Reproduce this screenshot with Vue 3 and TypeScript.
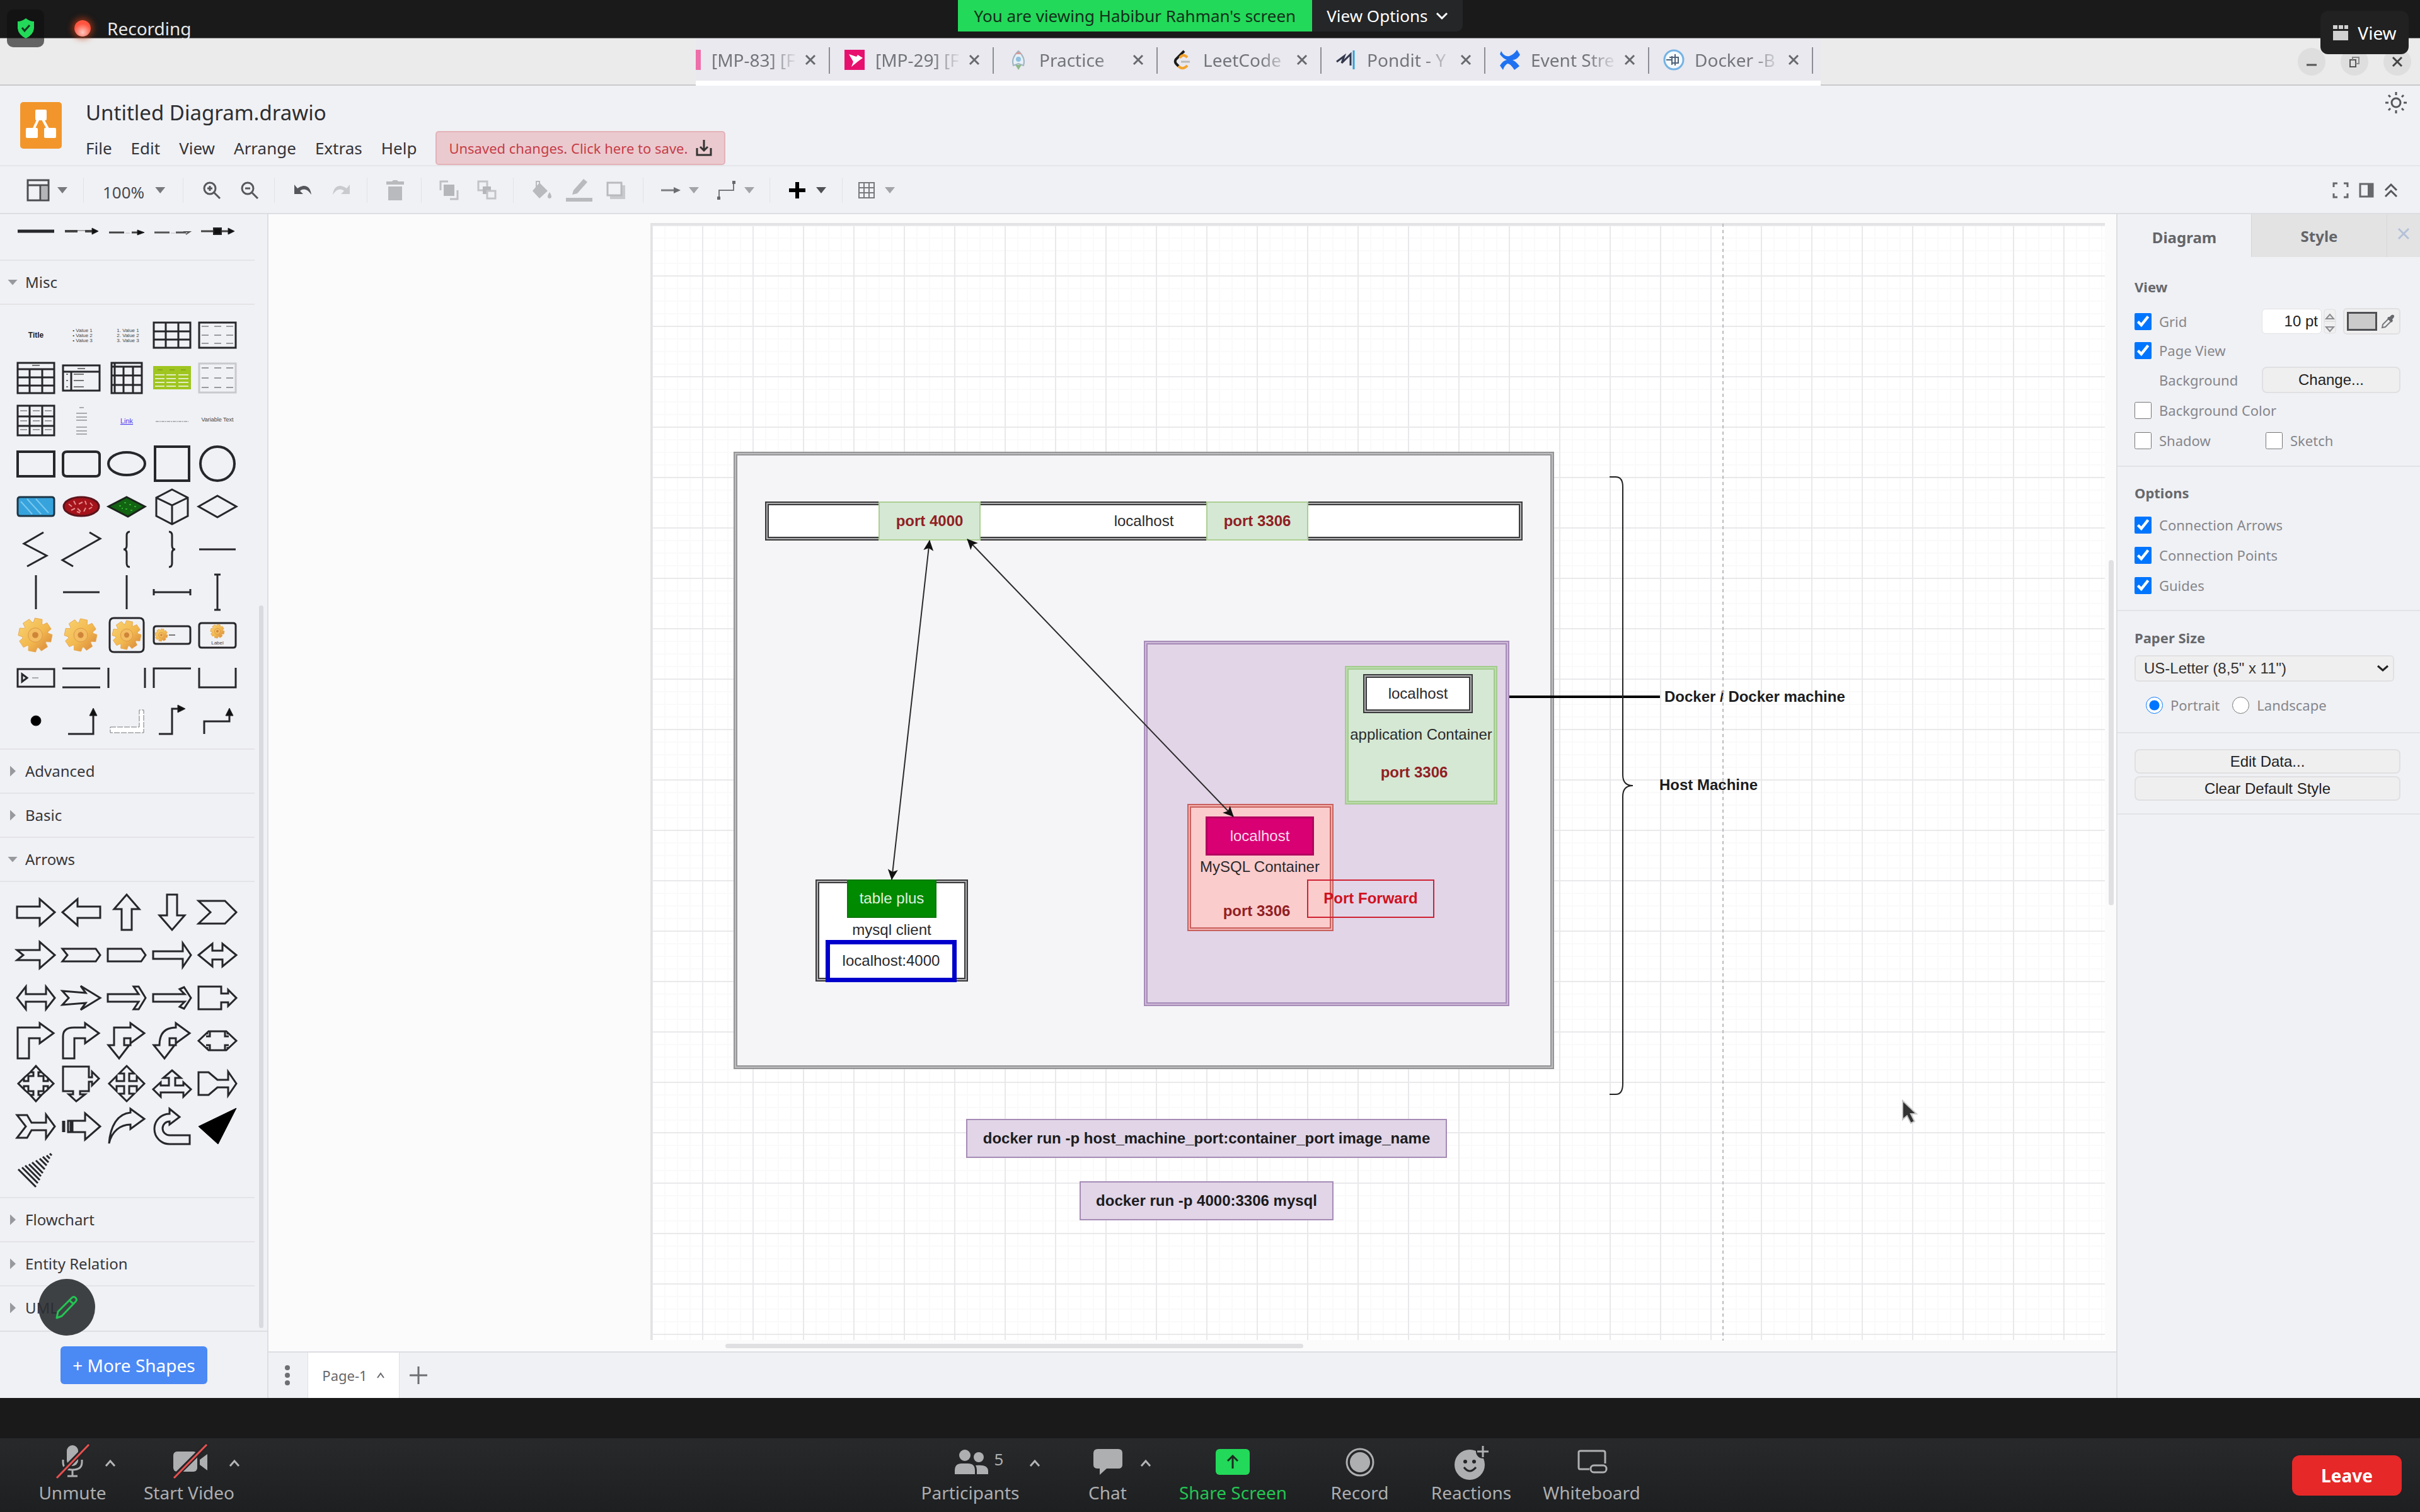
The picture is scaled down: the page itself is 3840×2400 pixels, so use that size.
<script setup lang="ts">
import { ref } from 'vue'

type Path = { d: string; f?: string; s?: string; w?: number; dash?: string }
type Label = { x: number; y: number; t: string; c?: string }
type Shape = { p?: Path[]; t?: Label[]; gear?: [number, number, number] }

const INK = '#26272a'
const line = (d: string, w = 3): Path => ({ d, w })
const solid = (d: string): Path => ({ d, f: '#111', w: 1 })

function gearPath(cx: number, cy: number, r: number): string {
  const pts: string[] = []
  const teeth = 8
  for (let i = 0; i < teeth; i++) {
    const a = (i / teeth) * Math.PI * 2 + 0.2
    const steps: [number, number][] = [[-0.34, 0.76], [-0.22, 1], [0.22, 1], [0.34, 0.76]]
    for (const [off, k] of steps) {
      pts.push(`${(cx + Math.cos(a + off) * r * k).toFixed(1)} ${(cy + Math.sin(a + off) * r * k).toFixed(1)}`)
    }
  }
  return 'M' + pts.join('L') + 'Z'
}

const dashes = (ys: number[]): Path => ({
  d: ys.map((y) => `M-25 ${y}h11M-5 ${y}h11M14 ${y}h11`).join(''),
  s: '#9a9ba0',
  w: 2,
})

const connectors: Shape[] = [
  { p: [line('M-29 0H29', 5)] },
  { p: [{ d: 'M-26 0H-6M6 0H18', w: 4, s: '#444' }, { d: 'M-6 -1H6', s: '#aaa', w: 2 }, solid('M17-5L27 0L17 5Z')] },
  { p: [{ d: 'M-28 2H-4M8 2H20', w: 3, s: '#444' }, { d: 'M-2 3H5', s: '#bbb', w: 1 }, solid('M17-2L28 2L17 6Z')] },
  { p: [{ d: 'M-28 2H-4M6 2H22', w: 3, s: '#555' }, { d: 'M-2 3H5', s: '#bbb', w: 1 }, { d: 'M18 1H28L22 5', s: '#555', w: 2 }] },
  { p: [{ d: 'M-26 0H20', w: 3, s: '#444' }, { d: 'M-6-5H6V5H-6Z', f: '#111', w: 2 }, solid('M17-5L27 0L17 5Z')] },
]

const misc: Shape[] = [
  { t: [{ x: 0, y: 4, t: 'Title', c: 'b' }] },
  { t: [{ x: 2, y: -5, t: '• Value 1' }, { x: 2, y: 3, t: '• Value 2' }, { x: 2, y: 11, t: '• Value 3' }] },
  { t: [{ x: 2, y: -5, t: '1. Value 1' }, { x: 2, y: 3, t: '2. Value 2' }, { x: 2, y: 11, t: '3. Value 3' }] },
  { p: [line('M-29-20H29V20H-29ZM-10-20V20M10-20V20M-29-6H29M-29 7H29')] },
  { p: [line('M-29-20H29V20H-29Z'), dashes([-14, 0, 13])] },
  { p: [line('M-29-24H29V24H-29ZM-29-14H29M-10-14V24M10-14V24M-29-1H29M-29 12H29'), { d: 'M-6-20H6', s: '#777', w: 2 }] },
  { p: [line('M-29-20H29V20H-29ZM-29-10H29M-16-10V20'), { d: 'M-6-15H6M-12-6H4M-12 4H4M-12 14H4M-24-6h3M-24 4h3M-24 14h3', s: '#777', w: 2 }] },
  { p: [line('M-24-24H24V24H-24ZM-24-18H24M-19-24V24M-5-18V24M10-18V24M-24-4H24M-24 11H24')] },
  { p: [{ d: 'M-29-18H29V17H-29Z', f: '#9fc51f', s: '#9fc51f', w: 2 }, { d: 'M-27-5h15M-9-5h15M10-5h16M-27 1h15M-9 1h15M10 1h16M-27 7h15M-9 7h15M10 7h16M-27 13h15M-9 13h15M10 13h16', s: '#e3edc0', w: 2 }, { d: 'M-23-13h8M-4-13h8M14-13h8', s: '#6f8f10', w: 1 }] },
  { p: [{ d: 'M-29-23H29V23H-29Z', s: '#c9cacd', w: 3 }, dashes([-16, 0, 15])] },
  { p: [line('M-29-24H29V23H-29ZM-10-24V23M10-24V23M-29-7H29M-29 8H29'), dashes([-16, 0, 14])] },
  { p: [{ d: 'M-3-21H4M-8-12H9M-8-6H9M-8-1H9M-8 10H9M-8 16H9M-8 21H9', s: '#a9aaae', w: 2 }] },
  { t: [{ x: 0, y: 4, t: 'Link', c: 'link' }] },
  { p: [{ d: 'M-26 1H26', s: '#b3b4b8', w: 2, dash: '5 1 2 1' }] },
  { t: [{ x: 0, y: 1, t: 'Variable Text', c: 'var' }] },
  { p: [line('M-29-19H29V20H-29Z', 4)] },
  { p: [line('M-23-19H23Q29-19 29-13V14Q29 20 23 20H-23Q-29 20-29 14V-13Q-29-19-23-19Z', 4)] },
  { p: [line('M-29 0A29 18 0 1 1 29 0A29 18 0 1 1-29 0Z', 4)] },
  { p: [line('M-27-27H27V27H-27Z', 4)] },
  { p: [line('M-27 0A27 27 0 1 1 27 0A27 27 0 1 1-27 0Z', 4)] },
  { p: [{ d: 'M-25-15H25Q29-15 29-11V11Q29 15 25 15H-25Q-29 15-29 11V-11Q-29-15-25-15Z', f: '#36a3dd', w: 3, s: '#1d3444' }, { d: 'M-24-8L-6 12M-14-12L8 12M0-12L20 10', s: '#7cc8ee', w: 2 }] },
  { p: [{ d: 'M-28 0A28 15 0 1 1 28 0A28 15 0 1 1-28 0Z', f: '#a5131b', w: 3, s: '#5c141c' }, { d: 'M-20-4l5 4M-12-9l3 6M-4-4l6-3M6-9l2 6M14-6l4 5M-16 6l6-3M-6 3l5 5M4 8l3-6M12 4l5-3M-2 10l-5-2', s: '#e58d8d', w: 2 }] },
  { p: [{ d: 'M0-15L29 0L2 16L-29 0Z', f: '#126312', w: 3, s: '#1c241c' }, { d: 'M-12-1h3M-4-6h3M4-3h3M12 0h3M-2 4h3M6 6h3M-8 3h2', s: '#2fae2f', w: 2 }] },
  { p: [line('M0-27L25-14V15L0 28L-25 15V-14ZM-25-14L0-2L25-14M0-2V28')] },
  { p: [line('M-30 0L0-17L30 0L0 17Z')] },
  { p: [line('M12-27L-19-9L17 10L-14 27')] },
  { p: [line('M13-27L30-17L-30 17L-13 27')] },
  { p: [line('M5-28Q0-28 0-22V-6Q0 0-5 0Q0 0 0 6V22Q0 28 5 28')] },
  { p: [line('M-5-28Q0-28 0-22V-6Q0 0 5 0Q0 0 0 6V22Q0 28-5 28')] },
  { p: [line('M-29 0H29')] },
  { p: [line('M0-27V27')] },
  { p: [line('M-29 0H29')] },
  { p: [line('M0-27V27')] },
  { p: [line('M-29 0H29M-29-5V5M29-5V5')] },
  { p: [line('M0-28V28M-5-28H5M-5 28H5')] },
  { gear: [-1, 0, 27] },
  { gear: [-1, 0, 26] },
  { p: [line('M-20-27H20Q27-27 27-20V20Q27 27 20 27H-20Q-27 27-27 20V-20Q-27-27-20-27Z')], gear: [0, 0, 23] },
  { p: [line('M-25-14H25Q29-14 29-10V10Q29 14 25 14H-25Q-29 14-29 10V-10Q-29-14-25-14Z'), { d: 'M-5 0H5', s: '#777', w: 2 }], gear: [-17, 0, 10] },
  { p: [line('M-25-19H25Q29-19 29-15V16Q29 20 25 20H-25Q-29 20-29 16V-15Q-29-19-25-19Z')], gear: [0, -6, 11], t: [{ x: 0, y: 15, t: 'Label' }] },
  { p: [line('M-29-14H29V14H-29Z'), { d: 'M-22-6L-14 0L-22 6Z', w: 3 }, { d: 'M-6 0H4', s: '#aaa', w: 2 }] },
  { p: [line('M-30-15H30M-30 15H30')] },
  { p: [line('M-29-16V16M29-16V16')] },
  { p: [line('M-29 16V-15H30')] },
  { p: [line('M-29-16V15H29V-16')] },
  { p: [{ d: 'M-8 0A8 8 0 1 1 8 0A8 8 0 1 1-8 0Z', f: '#000', w: 1 }] },
  { p: [line('M-21 21H19V-12'), solid('M19-20L25-8H13Z')] },
  { p: [{ d: 'M-26 10H20V-17H27V19H-26Z', f: '#fff', s: '#77787b', w: 1, dash: '9 2' }] },
  { p: [line('M-21 21H0V-19H12'), solid('M21-19L9-25V-13Z')] },
  { p: [line('M-21 21V1H19V-12'), solid('M19-20L25-8H13Z')] },
]

const fan = Array.from({ length: 10 }, (_, i) => {
  const t = i / 10
  return `M${Math.round(-28 + 56 * t)} ${Math.round(-28 * t)}L${Math.round(28 * t)} ${Math.round(28 - 56 * t)}`
}).join('')

const arrows: Shape[] = [
  'M-30-9H6V-21L30 0L6 21V9H-30Z',
  'M30-9H-6V-21L-30 0L-6 21V9H30Z',
  'M-8 28V-5H-20L0-28L20-5H8V28Z',
  'M-8-28V5H-20L0 28L20 5H8V-28Z',
  'M-30-18H12L30 0L12 18H-30L-11 0Z',
  'M-30-8H6V-21L30 0L6 21V8H-30L-20 0Z',
  'M-30-10H23L30 0L23 10H-30L-22 0Z',
  'M-30-10H23L30 0L23 10H-30Z',
  'M-30-6H17V-19L30 0L17 19V6H-30Z',
  'M-30 0L-8-18V-7H8V-18L30 0L8 18V7H-8V18Z',
  'M-30 0L-16-18V-6H16V-18L30 0L16 18V6H-16V18Z',
  'M-30-11L7-8L-1-19L30 0L-1 19L7 8L-30 11L-20 0Z',
  'M-30-6H19L11-18H19L30 0L19 18H11L19 6H-30Z',
  'M-30-6H20L12-14L19-17L30 0L19 17L12 14L20 6H-30Z',
  'M-30-18H6V-7H17V-13L30 0L17 13V7H6V18H-30Z',
  'M-29 28V-21H6V-28L28-12L6 4V-4H-11V28Z',
  'M-29 28V-7Q-29-21-12-21H6V-28L28-12L6 4V-4H-11V28Z',
  'M-20 7H-29L-12 28L4 7H-4V-4H6V4L28-12L6-28V-21H-20ZM-4 7H6V-4',
  'M-20 7H-29L-12 28L4 7H-4V-4H6V4L28-12L6-28V-21Q-20-21-20 7ZM-4 7H6V-4',
  'M-30 0L-14-15H14L30 0L14 15H-14ZM-18-7H-12V-14M18-7H12V-14M-18 7H-12V14M18 7H12V14M-16-10V-12M16-10V-12M-16 10V12M16 10V12',
  'M0-28L9-18H4V-12H12V-4H19V-9L28 0L19 9V4H12V12H4V18H9L0 28L-9 18H-4V12H-12V4H-19V9L-28 0L-19-9V-4H-12V-12H-4V-18H-9ZM9-18L19-9M9 18L19 9M-9-18L-19-9M-9 18L-19 9',
  'M-29-27H12V-10H17V-19L28-8L17 3V-3H12V12H-2V17H6L-8 28L-20 17H-13V12H-29Z',
  'M0-28L12-16H4V-4H16V-12L28 0L16 12V4H4V16H12L0 28L-12 16H-4V4H-16V12L-28 0L-16-12V-4H-4V-16H-12Z',
  'M0-21L14-9H5V3H18V-2L30 9L18 21V14H-18V21L-30 9L-18-2V3H-5V-9H-14Z',
  'M-30-18H-14L0-6H17V-19L30 0L17 19V6H0L-14 18H-30Z',
  'M-30-18H-14L-7-6H16V-19L30 0L16 19V6H-7L-14 18H-30L-16 0Z',
  'M-14-9H6V-21L30 0L6 21V9H-14ZM-29-9V9M-27-9V9M-21-9H-15V9H-21ZM-17-9V9',
  'M-28 27C-26 0-15-20 6-22V-28L28-12L6 4V-3C-10-3-24 8-28 27Z',
  'M28 28H-4A24 24 0 0 1-4-20V-28L12-15L-4-3V-8A11 11 0 0 0-4 14H28Z',
].map((d) => ({ p: [line(d)] }))
arrows.push({ p: [{ d: 'M30-29L-30 0L1 28Z', f: '#000', s: '#000', w: 1 }] })
arrows.push({ p: [line(fan, 3)] })

type Section = { title: string; open: boolean; shapes: Shape[] }
const sections = ref<Section[]>([
  { title: 'Misc', open: true, shapes: misc },
  { title: 'Advanced', open: false, shapes: [] },
  { title: 'Basic', open: false, shapes: [] },
  { title: 'Arrows', open: true, shapes: arrows },
  { title: 'Flowchart', open: false, shapes: [] },
  { title: 'Entity Relation', open: false, shapes: [] },
  { title: 'UML', open: false, shapes: [] },
])

const tabs = [
  { title: '[MP-83] [F', icon: 'sliver' },
  { title: '[MP-29] [F', icon: 'pink' },
  { title: 'Practice', icon: 'rocket' },
  { title: 'LeetCode', icon: 'leet' },
  { title: 'Pondit - Y', icon: 'pondit' },
  { title: 'Event Stre', icon: 'conf' },
  { title: 'Docker -B', icon: 'docker' },
]
const menus = ['File', 'Edit', 'View', 'Arrange', 'Extras', 'Help']

type Node = { k: string; x: number; y: number; w: number; h: number; t?: string }
const nodes: Node[] = [
  { k: 'host dbl', x: 738, y: 377, w: 1302, h: 980 },
  { k: 'plain dbl', x: 788, y: 456, w: 1202, h: 62, t: 'localhost' },
  { k: 'green strong', x: 968, y: 456, w: 162, h: 62, t: 'port 4000' },
  { k: 'green strong', x: 1488, y: 456, w: 162, h: 62, t: 'port 3306' },
  { k: 'purple dbl', x: 1389, y: 677, w: 580, h: 580 },
  { k: 'app dbl', x: 1708, y: 717, w: 242, h: 220 },
  { k: 'plain dbl', x: 1737, y: 730, w: 174, h: 62, t: 'localhost' },
  { k: 'bare', x: 1708, y: 806, w: 242, h: 40, t: 'application Container' },
  { k: 'bare strong', x: 1728, y: 866, w: 180, h: 40, t: 'port 3306' },
  { k: 'mysql dbl', x: 1458, y: 936, w: 232, h: 202 },
  { k: 'magenta', x: 1487, y: 956, w: 172, h: 62, t: 'localhost' },
  { k: 'bare', x: 1458, y: 1016, w: 230, h: 40, t: 'MySQL Container' },
  { k: 'bare strong', x: 1478, y: 1086, w: 180, h: 40, t: 'port 3306' },
  { k: 'forward', x: 1648, y: 1056, w: 202, h: 61, t: 'Port Forward' },
  { k: 'plain dbl', x: 868, y: 1056, w: 242, h: 162 },
  { k: 'plus', x: 918, y: 1056, w: 142, h: 61, t: 'table plus' },
  { k: 'bare', x: 888, y: 1116, w: 202, h: 40, t: 'mysql client' },
  { k: 'blue', x: 884, y: 1152, w: 208, h: 67, t: 'localhost:4000' },
  { k: 'cmd', x: 1107, y: 1436, w: 763, h: 62, t: 'docker run -p host_machine_port:container_port image_name' },
  { k: 'cmd', x: 1287, y: 1535, w: 403, h: 62, t: 'docker run -p 4000:3306 mysql' },
  { k: 'caption', x: 2215, y: 746, w: 300, h: 40, t: 'Docker / Docker machine' },
  { k: 'caption', x: 2207, y: 886, w: 200, h: 40, t: 'Host Machine' },
]
const place = (n: Node) => ({ left: n.x + 'px', top: n.y + 'px', width: n.w + 'px', height: n.h + 'px' })

const opts = ref({ grid: true, pageView: true, bg: false, shadow: false, sketch: false, arrows: true, points: true, guides: true })
const paper = ref('portrait')
const gridSize = ref('10 pt')

const left = [
  { label: 'Unmute', icon: 'mic', w: 230, caret: 60 },
  { label: 'Start Video', icon: 'cam', w: 140, caret: 72 },
]
const centre = [
  { label: 'Participants', icon: 'people', w: 240, caret: 102 },
  { label: 'Chat', icon: 'chat', w: 196, caret: 60 },
  { label: 'Share Screen', icon: 'share', w: 202, caret: 0 },
  { label: 'Record', icon: 'record', w: 200, caret: 0 },
  { label: 'Reactions', icon: 'react', w: 154, caret: 0 },
  { label: 'Whiteboard', icon: 'board', w: 228, caret: 0 },
]
const groups = [{ name: 'left', items: left }, { name: 'centre', items: centre }]
</script>

<template>
  <div class="screen">
    <header class="meeting">
      <div class="rec">
        <span class="shield">
          <svg width="28" height="34" viewBox="0 0 28 34"><path d="M14 1Q20 6 27 6V17Q26 27 14 33Q2 27 1 17V6Q8 6 14 1Z" fill="#23d959" /><path d="M8 16L12 21L20 12" fill="none" stroke="#14351f" stroke-width="3" /></svg>
        </span>
        <span class="dot"></span>
        <span>Recording</span>
      </div>
      <div class="viewing">
        <span class="banner">You are viewing Habibur Rahman's screen</span>
        <button class="options">View Options
          <svg width="20" height="12" viewBox="0 0 20 12"><path d="M2 2L10 10L18 2" fill="none" stroke="#fff" stroke-width="3" /></svg>
        </button>
      </div>
      <button class="viewbtn">
        <svg width="26" height="26" viewBox="0 0 26 26" fill="#d0d0d0"><path d="M1 1h7v6H1zM10 1h7v6h-7zM19 1h6v6h-6zM1 10h24v15H1z" /></svg>
        View
      </button>
    </header>

    <div class="strip">
      <div class="edge"></div>
      <nav class="tabs" aria-label="Browser tabs">
        <div v-for="tab in tabs" :key="tab.title" class="tab" :class="tab.icon">
          <svg class="fav" width="34" height="34" viewBox="0 0 34 34" preserveAspectRatio="xMaxYMid slice">
            <rect v-if="tab.icon === 'sliver'" x="26" y="1" width="8" height="32" fill="#ee6fa9" />
            <template v-if="tab.icon === 'pink'"><rect x="1" y="1" width="32" height="32" fill="#e8106e" /><path d="M8 8L20 12L22 9L30 14L23 19L12 28L15 20Z" fill="#fff" /></template>
            <template v-if="tab.icon === 'rocket'"><path d="M9 26Q5 14 17 3Q29 14 25 26L17 23Z" fill="#e8f0f6" stroke="#9fb4c2" stroke-width="2" /><path d="M12 8Q17 1 22 8Z" fill="#d99a94" /><path d="M12 25L17 33L22 25Z" fill="#8fb98a" /><circle cx="17" cy="16" r="4" fill="#8fc1e0" /></template>
            <template v-if="tab.icon === 'leet'"><path d="M20 3L7 16Q4 20 8 24L11 27" fill="none" stroke="#1b1b1b" stroke-width="4" /><path d="M25 13Q18 6 13 14M11 27Q18 34 25 26" fill="none" stroke="#f3a32e" stroke-width="4" /><path d="M15 20H29" stroke="#b9b9b9" stroke-width="3" /></template>
            <template v-if="tab.icon === 'pondit'"><path d="M2 20L14 11L10 22L24 8V26" fill="none" stroke="#33384d" stroke-width="3" /><path d="M29 2V32" stroke="#2f9fd8" stroke-width="3" /></template>
            <template v-if="tab.icon === 'conf'"><path d="M3 3Q8 13 16 11Q24 8 28 1L33 9Q27 18 21 17Q27 20 32 27L24 33Q17 22 13 23Q8 26 6 33L1 26Q6 18 12 17Q6 15 1 8Z" fill="#1e72f2" /></template>
            <template v-if="tab.icon === 'docker'"><circle cx="17" cy="17" r="15" fill="#f5fafe" stroke="#74b3e4" stroke-width="3" /><path d="M5 17H14M14 11V25M19 8V26M24 13V22M10 13H25M13 22H25" fill="none" stroke="#4f6379" stroke-width="2" /></template>
          </svg>
          <span class="tabtitle">{{ tab.title }}</span>
          <button class="x" aria-label="Close tab"><svg width="20" height="20" viewBox="0 0 20 20"><path d="M3 3L17 17M17 3L3 17" stroke="#68696e" stroke-width="3" /></svg></button>
        </div>
      </nav>
      <div class="edge grow">
        <button class="win" aria-label="Minimize"><svg width="20" height="20" viewBox="0 0 20 20"><path d="M2 15H18" stroke="#555" stroke-width="3" /></svg></button>
        <button class="win" aria-label="Restore"><svg width="20" height="20" viewBox="0 0 20 20" fill="none" stroke="#555" stroke-width="2"><path d="M3 7H12V18H3Z" /><path d="M7 7V3H17V13H12" stroke="#8a8a8a" /></svg></button>
        <button class="win" aria-label="Close"><svg width="20" height="20" viewBox="0 0 20 20"><path d="M3 3L17 17M17 3L3 17" stroke="#444" stroke-width="3" /></svg></button>
      </div>
    </div>

    <div class="apphead">
      <svg class="logo" width="66" height="74" viewBox="0 0 66 74">
        <rect width="66" height="74" rx="5" fill="#f2962c" />
        <path d="M32 20L19 48M32 20L47 48" stroke="#fff" stroke-width="4" />
        <rect x="24" y="12" width="18" height="17" rx="2" fill="#fff" /><rect x="9" y="41" width="19" height="16" rx="2" fill="#fff" /><rect x="38" y="41" width="19" height="16" rx="2" fill="#fff" />
      </svg>
      <div class="titles">
        <h1>Untitled Diagram.drawio</h1>
        <div class="menubar">
          <a v-for="m in menus" :key="m" href="#">{{ m }}</a>
          <button class="unsaved">Unsaved changes. Click here to save.
            <svg width="26" height="28" viewBox="0 0 26 28" fill="none" stroke="#333"><path d="M13 1V18M7 12L13 18L19 12" stroke-width="3" /><path d="M2 14V25H24V14" stroke-width="3" /></svg>
          </button>
        </div>
      </div>
      <svg class="sun" width="34" height="34" viewBox="0 0 34 34" fill="none" stroke="#55575c" stroke-width="3"><circle cx="17" cy="17" r="7" /><path d="M17 0V5M17 29V34M0 17H5M29 17H34M5 5L8 8M26 26L29 29M29 5L26 8M8 26L5 29" /></svg>
    </div>

    <div class="toolbar">
      <div class="g g1">
        <svg width="37" height="36" viewBox="0 0 37 36"><rect x="2" y="2" width="33" height="32" fill="none" stroke="#4c4e52" stroke-width="3" /><path d="M2 10H35M22 10V34" stroke="#4c4e52" stroke-width="3" /><rect x="24" y="12" width="9" height="20" fill="#b4b5b9" /></svg>
        <i class="car"></i>
      </div>
      <div class="g g2"><span>100%</span><i class="car"></i></div>
      <div class="g g3">
        <svg width="30" height="30" viewBox="0 0 30 30" fill="none" stroke="#56585d" stroke-width="3"><circle cx="12" cy="12" r="9" /><path d="M19 19L28 28M12 8V16M8 12H16" /></svg>
        <svg width="30" height="30" viewBox="0 0 30 30" fill="none" stroke="#56585d" stroke-width="3"><circle cx="12" cy="12" r="9" /><path d="M19 19L28 28M8 12H16" /></svg>
      </div>
      <div class="g g4">
        <svg width="32" height="28" viewBox="0 0 32 28"><path d="M2 5V20H16L11 15Q20 8 29 21Q27 6 16 7Q11 8 7 11Z" fill="#55575c" /></svg>
        <svg width="32" height="28" viewBox="0 0 32 28"><path d="M30 5V20H16L21 15Q12 8 3 21Q5 6 16 7Q21 8 25 11Z" fill="#c9cacd" /></svg>
      </div>
      <div class="g g5"><svg width="28" height="32" viewBox="0 0 28 32" fill="#b9babd"><path d="M0 2H9L11 0H17L19 2H28V7H0ZM3 10H25V32H3Z" /></svg></div>
      <div class="g g6">
        <svg width="31" height="32" viewBox="0 0 31 32"><path d="M2 16V2H14M29 16V30H17" fill="none" stroke="#bfc0c4" stroke-width="3" /><rect x="7" y="7" width="17" height="18" fill="#b5b6ba" /></svg>
        <svg width="31" height="32" viewBox="0 0 31 32"><rect x="2" y="2" width="14" height="14" fill="none" stroke="#c3c4c7" stroke-width="3" /><rect x="9" y="10" width="13" height="12" fill="#b5b6ba" /><rect x="16" y="17" width="13" height="12" fill="#f0f1f5" stroke="#c3c4c7" stroke-width="3" /></svg>
      </div>
      <div class="g g7">
        <svg width="33" height="32" viewBox="0 0 33 32" fill="#b9babd"><path d="M13 4L26 17L13 29L2 17Z" /><path d="M13 10V2H8V12" fill="none" stroke="#b9babd" stroke-width="2" /><path d="M29 19Q35 28 29 29Q23 28 29 19Z" /></svg>
        <svg width="42" height="38" viewBox="0 0 42 38" fill="#b9babd"><path d="M10 26L12 19L28 1L34 6L18 24Z" /><rect y="31" width="42" height="6" /></svg>
        <svg width="30" height="28" viewBox="0 0 30 28"><rect x="6" y="6" width="24" height="22" fill="#c9cacd" /><rect x="2" y="2" width="22" height="20" fill="#f0f1f5" stroke="#b9babd" stroke-width="3" /></svg>
      </div>
      <div class="g g8">
        <svg width="32" height="16" viewBox="0 0 32 16"><path d="M0 8H22" stroke="#7b7d81" stroke-width="3" /><path d="M20 3L31 8L20 13Z" fill="#6b6d71" /></svg><i class="car soft"></i>
        <svg class="way" width="32" height="32" viewBox="0 0 32 32"><path d="M4 28V16H27V4" fill="none" stroke="#77797d" stroke-width="2" /><rect x="1" y="26" width="5" height="5" fill="#66686c" /><rect x="25" y="1" width="5" height="5" fill="#66686c" /></svg><i class="car soft"></i>
      </div>
      <div class="g g9"><svg width="28" height="28" viewBox="0 0 28 28"><path d="M14 1V27M1 14H27" stroke="#000" stroke-width="6" /></svg><i class="car dark"></i></div>
      <div class="g g10"><svg width="28" height="28" viewBox="0 0 28 28"><path d="M2 2H26V26H2ZM10 2V26M18 2V26M2 10H26M2 18H26" fill="none" stroke="#77797d" stroke-width="2" /></svg><i class="car soft"></i></div>
      <div class="tools-right">
        <svg width="26" height="26" viewBox="0 0 26 26" fill="none" stroke="#66686c" stroke-width="3"><path d="M2 8V2H8M18 2H24V8M24 18V24H18M8 24H2V18" /></svg>
        <svg width="24" height="24" viewBox="0 0 24 24"><rect x="2" y="2" width="20" height="20" fill="none" stroke="#66686c" stroke-width="3" /><rect x="14" y="2" width="8" height="20" fill="#66686c" /></svg>
        <svg width="22" height="24" viewBox="0 0 22 24" fill="none" stroke="#55575c" stroke-width="3"><path d="M2 12L11 3L20 12M2 22L11 13L20 22" /></svg>
      </div>
    </div>

    <main class="work">
      <aside class="side">
        <div class="scroll">
          <div class="shapes first">
            <svg v-for="(s, i) in connectors" :key="i" width="72" height="54" viewBox="-36 -27 72 54">
              <path v-for="(p, j) in s.p" :key="j" :d="p.d" :fill="p.f || 'none'" :stroke="p.s || INK" :stroke-width="p.w" />
            </svg>
          </div>
          <section v-for="sec in sections" :key="sec.title">
            <button class="sechead" @click="sec.open = !sec.open">
              <i :class="sec.open ? 'down' : 'right'"></i>{{ sec.title }}
            </button>
            <div v-if="sec.open" class="shapes">
              <svg v-for="(s, i) in sec.shapes" :key="i" width="72" height="68" viewBox="-36 -34 72 68">
                <path v-for="(p, j) in s.p" :key="j" :d="p.d" :fill="p.f || 'none'" :stroke="p.s || INK" :stroke-width="p.w" :stroke-dasharray="p.dash" />
                <template v-if="s.gear">
                  <path :d="gearPath(...s.gear)" fill="url(#gold)" stroke="#e8ab52" stroke-width="1" stroke-linejoin="round" />
                  <circle :cx="s.gear[0]" :cy="s.gear[1]" :r="s.gear[2] * 0.42" fill="#f4bd62" stroke="#dc9a45" stroke-width="1" />
                  <circle :cx="s.gear[0]" :cy="s.gear[1]" :r="s.gear[2] * 0.18" fill="#cf8538" />
                </template>
                <text v-for="l in s.t" :key="l.t" :x="l.x" :y="l.y" :class="l.c || 'tiny'">{{ l.t }}</text>
              </svg>
            </div>
          </section>
          <svg width="0" height="0" class="defs"><defs><linearGradient id="gold" x1="0" y1="0" x2="1" y2="1"><stop offset="0" stop-color="#f9d474" /><stop offset="0.55" stop-color="#f2b84e" /><stop offset="1" stop-color="#d5803a" /></linearGradient></defs></svg>
          <div class="thumb"></div>
        </div>
        <div class="more"><button>+ More Shapes</button></div>
        <button class="annotate" aria-label="Annotate">
          <svg width="36" height="38" viewBox="0 0 36 38" fill="none" stroke="#23c552" stroke-width="3"><path d="M2 36L4 26L26 4Q29 1 32 4Q35 7 32 10L10 33ZM22 8L29 14" stroke-linejoin="round" /></svg>
        </button>
      </aside>

      <div class="middle">
        <div class="canvas">
          <div class="page"><div class="grid"></div></div>
          <div v-for="(n, i) in nodes" :key="i" class="node" :class="n.k" :style="place(n)">{{ n.t }}</div>
          <svg class="edges" width="100%" height="100%">
            <defs>
              <marker id="tip" markerUnits="userSpaceOnUse" markerWidth="20" markerHeight="20" refX="17" refY="9" orient="auto-start-reverse"><path d="M1 1L18 9L1 17L5 9Z" fill="#111" /></marker>
            </defs>
            <path d="M2308 15V1788" stroke="#bcbcc0" stroke-width="2" stroke-dasharray="5 5" />
            <path d="M1049 518L989 1056" class="wire" />
            <path d="M1109 516L1531 956" class="wire" />
            <path d="M1969 766H2208" stroke="#000" stroke-width="4" />
            <path d="M2128 417H2138Q2149 417 2149 433V890Q2149 907 2165 907Q2149 907 2149 924V1380Q2149 1397 2138 1397H2128" fill="none" stroke="#222" stroke-width="2" />
            <path d="M2593 1407V1437L2600 1431L2606 1443L2612 1440L2606 1428H2615Z" fill="#333" stroke="#c8c8c8" stroke-width="2" />
          </svg>
          <div class="vbar"></div>
          <div class="hbar"></div>
        </div>
        <div class="pages">
          <button class="dots" aria-label="Pages"><svg width="8" height="34" viewBox="0 0 8 34" fill="#6d6f73"><circle cx="4" cy="5" r="4" /><circle cx="4" cy="17" r="4" /><circle cx="4" cy="29" r="4" /></svg></button>
          <button class="pagetab">Page-1 <svg width="14" height="10" viewBox="0 0 14 10"><path d="M2 9L7 2L12 9" fill="none" stroke="#66686c" stroke-width="2" /></svg></button>
          <button class="add" aria-label="Insert page"><svg width="28" height="28" viewBox="0 0 28 28"><path d="M14 0V28M0 14H28" stroke="#6d6f73" stroke-width="3" /></svg></button>
        </div>
      </div>

      <aside class="format">
        <div class="ftabs">
          <button class="on">Diagram</button>
          <button class="off">Style</button>
          <button class="shut" aria-label="Close panel"><svg width="20" height="20" viewBox="0 0 20 20"><path d="M2 2L18 18M18 2L2 18" stroke="#b3c1d8" stroke-width="3" /></svg></button>
        </div>
        <section class="view">
          <h2>View</h2>
          <div class="row short">
            <label><input v-model="opts.grid" type="checkbox">Grid</label>
            <div class="gridctl">
              <input v-model="gridSize" class="num" type="text" aria-label="Grid size">
              <span class="spin"><svg width="20" height="40" viewBox="0 0 20 40" fill="#e8e8ea" stroke="#8b8c90"><rect x="1" y="1" width="18" height="38" rx="4" fill="#f0f0f1" stroke="#dedee1" /><path d="M1 20H19" stroke="#cfcfd3" /><path d="M4 16L10 9L16 16ZM4 29L10 36L16 29Z" stroke-width="2" /></svg></span>
              <button class="swatch" aria-label="Grid color"><i></i><svg width="22" height="24" viewBox="0 0 22 24"><path d="M2 22L3 17L12 8L16 12L7 21Z" fill="none" stroke="#77797d" stroke-width="2" /><path d="M10 7L17 14L19 11L18 9Q23 4 20 2Q17 0 14 5L12 5Z" fill="#66686c" /></svg></button>
            </div>
          </div>
          <div class="row short"><label><input v-model="opts.pageView" type="checkbox">Page View</label></div>
          <div class="row"><span class="indent">Background</span><button class="btn change">Change...</button></div>
          <div class="row"><label><input v-model="opts.bg" type="checkbox">Background Color</label></div>
          <div class="row">
            <label class="half"><input v-model="opts.shadow" type="checkbox">Shadow</label>
            <label><input v-model="opts.sketch" type="checkbox">Sketch</label>
          </div>
        </section>
        <section class="options-sec">
          <h2>Options</h2>
          <div class="row"><label><input v-model="opts.arrows" type="checkbox">Connection Arrows</label></div>
          <div class="row"><label><input v-model="opts.points" type="checkbox">Connection Points</label></div>
          <div class="row"><label><input v-model="opts.guides" type="checkbox">Guides</label></div>
        </section>
        <section class="paper">
          <h2>Paper Size</h2>
          <div class="sel">
            <select aria-label="Paper size"><option>US-Letter (8,5" x 11")</option></select>
            <svg width="20" height="12" viewBox="0 0 20 12"><path d="M2 2L10 9L18 2" fill="none" stroke="#222" stroke-width="3" /></svg>
          </div>
          <div class="radios">
            <label><input v-model="paper" type="radio" value="portrait">Portrait</label>
            <label><input v-model="paper" type="radio" value="landscape">Landscape</label>
          </div>
        </section>
        <section class="actions">
          <button class="btn">Edit Data...</button>
          <button class="btn">Clear Default Style</button>
        </section>
      </aside>
    </main>

    <footer class="controls">
      <div v-for="g in groups" :key="g.name" :class="g.name">
        <div v-for="c in g.items" :key="c.label" class="ctl" :class="c.icon" :style="{ width: c.w + 'px' }">
          <button class="main">
            <svg width="80" height="60" viewBox="-40 -30 80 60" fill="#aeafb1">
              <template v-if="c.icon === 'mic'"><rect x="-9" y="-27" width="18" height="33" rx="9" /><path d="M-15-4V0Q-15 12 0 12Q15 12 15 0V-4M0 12V21M-8 22H8" fill="none" stroke="#aeafb1" stroke-width="3" /><path d="M-24 23L27-29" stroke="#232527" stroke-width="8" /><path d="M-25 25L26-28" stroke="#e8504f" stroke-width="3" /></template>
              <template v-if="c.icon === 'cam'"><rect x="-25" y="-17" width="38" height="32" rx="6" /><path d="M17-4L29-13V13L17 4Z" /><path d="M-23 23L29-29" stroke="#232527" stroke-width="8" /><path d="M-24 25L28-28" stroke="#e8504f" stroke-width="3" /></template>
              <template v-if="c.icon === 'people'"><circle cx="-9" cy="-11" r="9" /><circle cx="13" cy="-8" r="8" /><path d="M-25 19V13Q-25 2-14 2H-4Q7 2 7 13V19ZM10 19V12Q10 8 8 5Q28 3 28 14V19Z" /><text x="45" y="5" class="count">5</text></template>
              <template v-if="c.icon === 'chat'"><path d="M-16-21H16Q23-21 23-14V4Q23 10 16 10H-2L-13 20V10H-16Q-23 10-23 4V-14Q-23-21-16-21Z" /></template>
              <template v-if="c.icon === 'share'"><rect x="-27" y="-21" width="54" height="41" rx="6" fill="#23d959" /><path d="M0 10V-9M-8-2L0-10L8-2" fill="none" stroke="#1d2b21" stroke-width="3" /></template>
              <template v-if="c.icon === 'record'"><circle cy="0" r="21" fill="none" stroke="#aeafb1" stroke-width="3" /><circle r="16" /></template>
              <template v-if="c.icon === 'react'"><circle cx="-2" cy="4" r="24" /><circle cx="19" cy="-17" r="11" fill="#242628" /><path d="M19-26V-8M10-17H28" stroke="#aeafb1" stroke-width="3" /><circle cx="-9" cy="-1" r="3" fill="#242628" /><circle cx="5" cy="-1" r="3" fill="#242628" /><path d="M-11 8Q-2 20 8 8" fill="none" stroke="#242628" stroke-width="3" /></template>
              <template v-if="c.icon === 'board'"><path d="M-4 11H-19Q-21 11-21 8V-16Q-21-18-18-18H18Q21-18 21-15V2" fill="none" stroke="#aeafb1" stroke-width="3" /><rect x="-2" y="5" width="25" height="11" rx="5" fill="none" stroke="#aeafb1" stroke-width="3" /></template>
            </svg>
            <span>{{ c.label }}</span>
          </button>
          <button v-if="c.caret" class="caret" aria-label="More" :style="{ marginLeft: c.caret + 'px' }"><svg width="18" height="14" viewBox="0 0 18 14"><path d="M2 12L9 4L16 12" fill="none" stroke="#b4b5b7" stroke-width="3" /></svg></button>
        </div>
      </div>
      <button class="leave">Leave</button>
    </footer>
  </div>
</template>

<style>
body { margin: 0; background: #1a1a1a; }
</style>

<style scoped>
* { box-sizing: border-box; }
button, input, select { font: inherit; color: inherit; border: 0; background: none; padding: 0; margin: 0; }
svg { display: block; flex: none; }
h1, h2 { margin: 0; }
.screen { height: 100vh; display: flex; flex-direction: column; background: #1a1a1a; font-family: "Noto Sans", "Open Sans", sans-serif; font-size: 26px; line-height: 36px; color: #333; }

.meeting { height: 61px; flex: none; position: relative; display: flex; justify-content: center; border-bottom: 1px solid #777; color: #fff; z-index: 3; }
.rec { position: absolute; left: 11px; top: 15px; height: 60px; display: flex; align-items: center; color: #e8e8e8; font-size: 28px; }
.shield { width: 59px; height: 60px; border-radius: 10px; background: rgba(14, 16, 15, 0.62); display: flex; align-items: center; justify-content: center; }
.dot { width: 26px; height: 26px; border-radius: 50%; margin: 0 26px 0 48px; background: radial-gradient(circle at 50% 75%, #ffc9bf, #ff5440 60%); box-shadow: 0 0 10px 4px rgba(200, 60, 20, 0.6); }
.viewing { display: flex; height: 50px; }
.banner { background: #23d959; color: #12301b; padding: 0 26px; line-height: 50px; }
.options { background: #242628; color: #fff; display: flex; align-items: center; gap: 12px; padding: 0 23px; border-radius: 0 0 10px 0; }
.viewbtn { position: absolute; right: 18px; top: 17px; width: 140px; height: 69px; border-radius: 12px; background: #212121; color: #fff; font-size: 28px; display: flex; align-items: center; justify-content: center; gap: 14px; }

.strip { height: 75px; flex: none; display: flex; background: #fff; }
.edge { width: 1104px; background: #ebebeb; border-bottom: 2px solid #c9c9cb; }
.grow { flex: 1; display: flex; justify-content: flex-end; align-items: center; gap: 24px; padding-right: 14px; }
.win { width: 44px; height: 44px; border-radius: 50%; background: #dedede; display: flex; align-items: center; justify-content: center; }
.tabs { height: 67px; display: flex; background: #e9e9ef; padding-right: 12px; }
.tab { width: 260px; display: flex; align-items: center; padding: 0 21px 0 22px; height: 67px; font-size: 28px; color: #74757c; position: relative; }
.tab.sliver { width: 213px; padding-left: 0; }
.tab.sliver .fav { width: 8px; margin-right: 17px; }
.tab::after { content: ""; position: absolute; right: 0; top: 14px; width: 2px; height: 42px; background: #8d8e95; }
.fav { margin-right: 16px; }
.tabtitle { flex: 1; overflow: hidden; white-space: nowrap; -webkit-mask-image: linear-gradient(90deg, #000 62%, transparent 94%); mask-image: linear-gradient(90deg, #000 62%, transparent 94%); }

.apphead { height: 128px; flex: none; background: #f0f1f5; display: flex; padding: 24px 21px 0 32px; border-bottom: 2px solid #e5e6ea; }
.titles { margin-left: 38px; flex: 1; }
h1 { font-size: 33px; line-height: 38px; font-weight: 400; color: #2d2e31; }
.logo { margin-top: 2px; }
.menubar { display: flex; align-items: center; gap: 30px; margin-top: 10px; height: 54px; }
.menubar a { color: #333438; text-decoration: none; }
.unsaved { height: 54px; width: 460px; display: flex; align-items: center; justify-content: center; gap: 13px; font-size: 22px; color: #c63d48; background: #ebcacf; border: 2px solid #e3b3b9; border-radius: 5px; }
.sun { margin-top: -14px; }

.toolbar { height: 76px; flex: none; background: #f0f1f5; border-bottom: 2px solid #dddee2; display: flex; align-items: center; padding-top: 2px; color: #4a4b4f; }
.g { height: 40px; display: flex; align-items: center; border-right: 1px solid #e2e3e7; }
.g1 { width: 133px; padding-left: 42px; gap: 12px; }
.g2 { width: 158px; padding-left: 30px; gap: 17px; }
.g2 span { padding-top: 6px; }
.g3 { width: 145px; padding-left: 30px; gap: 30px; }
.g4 { width: 147px; padding-left: 29px; gap: 28px; }
.g5 { width: 86px; padding-left: 30px; }
.g6 { width: 146px; padding-left: 28px; gap: 29px; }
.g7 { width: 206px; padding-left: 28px; gap: 22px; }
.g8 { width: 201px; padding-left: 28px; gap: 12px; }
.g9 { width: 115px; padding-left: 29px; gap: 16px; }
.g10 { padding-left: 24px; gap: 15px; border-right: 0; }
.way { margin-left: 16px; }
.car { width: 16px; height: 10px; background: #77797d; clip-path: polygon(0 0, 100% 0, 50% 100%); }
.car.soft { background: #a3a4a8; }
.car.dark { background: #4f5155; }
.tools-right { margin-left: auto; display: flex; align-items: center; gap: 16px; padding-right: 35px; }

.work { flex: 1; min-height: 0; display: flex; }
.side { width: 426px; flex: none; background: #f0f1f5; border-right: 2px solid #dddee3; display: flex; flex-direction: column; position: relative; }
.scroll { flex: 1; min-height: 0; overflow: hidden; position: relative; border-bottom: 2px solid #dedfe3; }
.shapes { display: grid; grid-template-columns: repeat(5, 72px); padding: 14px 0 10px 21px; border-top: 2px solid #e4e4e7; width: 404px; }
.shapes.first { padding: 0 0 18px 21px; border-top: 0; }
.sechead { width: 404px; height: 70px; border-top: 2px solid #e4e4e7; display: flex; align-items: center; font-size: 24px; color: #36373b; padding-left: 12px; text-align: left; }
.sechead i { background: #98999e; }
.down { width: 16px; height: 9px; margin-right: 12px; clip-path: polygon(0 0, 100% 0, 50% 100%); }
.right { width: 9px; height: 17px; margin: 0 15px 0 4px; clip-path: polygon(0 0, 100% 50%, 0 100%); }
text { text-anchor: middle; fill: #444; font-family: "Liberation Sans", Arial, sans-serif; }
.tiny { font-size: 8px; }
.b { font-size: 12px; font-weight: 700; fill: #222; }
.link { font-size: 11px; fill: #4a3df0; text-decoration: underline; }
.var { font-size: 9px; }
.defs { position: absolute; }
.thumb { position: absolute; right: 6px; top: 621px; bottom: 4px; width: 7px; border-radius: 4px; background: #d8dae0; }
.more { height: 105px; display: flex; align-items: center; padding: 0 0 0 96px; }
.more button { width: 233px; height: 60px; border-radius: 6px; background: #4b89f5; color: #fff; font-size: 28px; }
.annotate { position: absolute; left: 61px; bottom: 99px; width: 90px; height: 90px; border-radius: 50%; background: rgba(42, 46, 49, 0.9); display: flex; align-items: center; justify-content: center; }

.middle { flex: 1; min-width: 0; display: flex; flex-direction: column; }
.canvas { flex: 1; position: relative; overflow: hidden; background: #fbfbfc; font-family: "Liberation Sans", Arial, sans-serif; font-size: 24px; }
.page { position: absolute; left: 606px; top: 14px; right: 18px; bottom: 18px; border-left: 3px solid #e3e3e6; border-top: 3px solid #e3e3e6; background: #fff; }
.grid { height: 100%; background-image: linear-gradient(90deg, #e9e9eb 2px, transparent 2px), linear-gradient(#e9e9eb 2px, transparent 2px), linear-gradient(90deg, #fafafb 2px, transparent 2px), linear-gradient(#fafafb 2px, transparent 2px); background-size: 80px 80px, 80px 80px, 20px 20px, 20px 20px; background-position: -1px 0; }
.node { position: absolute; display: flex; align-items: center; justify-content: center; white-space: nowrap; color: #2a2a2c; padding-bottom: 1px; }
.dbl { border: 2px solid var(--b); box-shadow: inset 0 0 0 2px var(--m), inset 0 0 0 4px var(--b); }
.host { --b: #959597; --m: #bdbdbf; background: #f5f5f8; }
.plain { --b: #3a3a3c; --m: #b0b0b2; background: #fff; }
.purple { --b: #a78bb8; --m: #cdb9d8; background: #e2d5e8; }
.app { --b: #a3cb8e; --m: #bddcae; background: #d5e8d4; }
.mysql { --b: #c9605d; --m: #f3b3b1; background: #fbcccc; }
.green { background: #d5e8d4; border: 2px solid #acd092; }
.strong { font-weight: 700; color: #911f24; }
.magenta { background: #d80073; border: 3px solid #b3005f; color: #fbdcec; }
.forward { border: 2px solid #cf2233; color: #d0121f; font-weight: 700; }
.plus { background: #008a00; border: 2px solid #087a08; color: #dff2df; }
.blue { background: #fff; border: 7px solid #0000cc; }
.cmd { background: #e1d5e7; border: 2px solid #a58bb5; font-weight: 700; color: #1c1c1e; }
.caption { justify-content: flex-start; font-weight: 700; color: #1c1c1e; }
.edges { position: absolute; inset: 0; }
.wire { fill: none; stroke: #2a2a2a; stroke-width: 2; marker-start: url(#tip); marker-end: url(#tip); }
.vbar { position: absolute; right: 4px; top: 549px; width: 8px; height: 548px; border-radius: 4px; background: #e0e0e3; }
.hbar { position: absolute; left: 725px; bottom: 5px; width: 917px; height: 7px; border-radius: 4px; background: #e0e0e3; }
.pages { height: 74px; flex: none; background: #f0f1f5; border-top: 2px solid #dddee2; display: flex; align-items: center; font-size: 22px; color: #66686c; }
.dots { width: 62px; display: flex; justify-content: center; padding-right: 2px; }
.pagetab { width: 146px; height: 72px; background: #fff; border-left: 1px solid #e0e0e3; border-right: 1px solid #e0e0e3; display: flex; align-items: center; justify-content: center; gap: 14px; }
.add { margin-left: 16px; }

.format { width: 482px; flex: none; background: #f0f1f5; border-left: 2px solid #dddee2; font-size: 22px; color: #85868b; }
.ftabs { display: flex; height: 68px; font-size: 24px; font-weight: 700; color: #636569; }
.on { width: 212px; padding-top: 5px; }
.off { width: 216px; padding-top: 2px; background: #e3e3e4; border-right: 1px solid #d7d7d9; border-left: 1px solid #d7d7d9; }
.shut { flex: 1; background: #e3e3e4; display: flex; align-items: center; justify-content: center; padding-bottom: 6px; }
.format section { padding: 0 31px 0 27px; border-bottom: 2px solid #e2e3e7; }
h2 { font-size: 22px; line-height: 32px; color: #66686c; }
.format .view { padding-top: 31px; height: 333px; }
.view h2 { margin-bottom: 16px; }
.row { height: 48px; display: flex; align-items: center; justify-content: space-between; }
.row.short { height: 46px; }
label { display: flex; align-items: center; }
input[type="checkbox"], input[type="radio"] { width: 27px; height: 27px; margin: 0 12px 0 0; accent-color: #0075ff; }
.half { width: 208px; }
.row .half + label { flex: 1; }
.indent { padding-left: 39px; }
.btn { height: 39px; border: 2px solid #e0e0e2; border-radius: 8px; background: #efeff0; color: #222; font-family: "Liberation Sans", Arial, sans-serif; font-size: 24px; line-height: 32px; }
.change { width: 220px; height: 42px; }
.gridctl { display: flex; align-items: center; gap: 3px; width: 220px; }
.num { width: 95px; height: 40px; background: #fff; border: 1px solid #e2e2e5; border-radius: 6px; text-align: right; padding-right: 5px; color: #222; font-family: "Liberation Sans", Arial, sans-serif; font-size: 24px; }
.spin { width: 21px; margin-right: 7px; }
.swatch { flex: 1; height: 42px; border: 2px solid #e0e0e2; border-radius: 6px; background: #efeff0; display: flex; align-items: center; justify-content: space-between; padding: 0 7px 0 4px; }
.swatch i { width: 48px; height: 30px; border: 3px solid #4f5053; background: #cbcbcb; }
.format .options-sec { height: 229px; padding-top: 25px; }
.options-sec h2 { margin-bottom: 11px; }
.format .paper { height: 194px; padding-top: 26px; }
.sel { position: relative; width: 412px; margin-top: 12px; }
.sel select { width: 100%; height: 42px; appearance: none; border: 2px solid #e0e0e2; border-radius: 6px; background: #efeff0; color: #333; padding: 0 13px; font-family: "Liberation Sans", Arial, sans-serif; font-size: 24px; }
.sel svg { position: absolute; right: 8px; top: 15px; }
.radios { display: flex; gap: 20px; padding: 19px 0 0 18px; }
.format .actions { height: 129px; padding-top: 25px; display: flex; flex-direction: column; gap: 4px; }

.controls { height: 117px; flex: none; margin-top: 64px; background: linear-gradient(#27292b, #1d1f21); display: flex; align-items: center; padding-right: 29px; font-size: 28px; color: #adaeb0; }
.left, .centre { display: flex; height: 117px; }
.centre { margin: 0 auto; padding-left: 52px; }
.ctl { position: relative; display: flex; justify-content: center; }
.main { display: flex; flex-direction: column; align-items: center; padding-top: 8px; white-space: nowrap; }
.main svg { overflow: visible; }
.share .main span { color: #23c552; }
.count { font-size: 26px; fill: #aeafb1; font-family: "Noto Sans", sans-serif; }
.caret { position: absolute; left: 50%; top: 32px; width: 18px; transform: translateX(-50%); }
.leave { width: 174px; height: 64px; border-radius: 12px; background: #e62828; color: #fff; font-weight: 700; }
</style>
